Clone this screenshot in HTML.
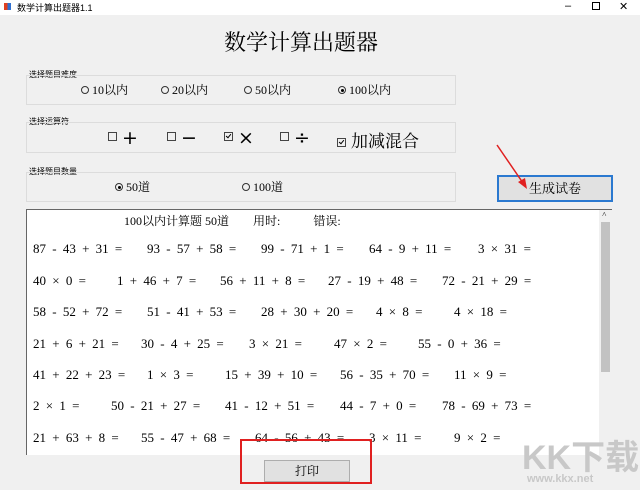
<!DOCTYPE html>
<html><head><meta charset="utf-8"><style>
*{margin:0;padding:0;box-sizing:border-box}
body{width:640px;height:490px;background:#f0f0f0;position:relative;overflow:hidden;font-family:"Liberation Serif","Noto Serif CJK SC",serif;color:#000}
.a{position:absolute;white-space:nowrap}
.tb{position:absolute;left:0;top:0;width:640px;height:15px;background:#fff;font-family:"Liberation Sans","Noto Sans CJK SC",sans-serif;font-size:9px}
.gb{position:absolute;border:1px solid #dcdcdc;left:26px;width:430px}
.lbl{position:absolute;font-family:"Liberation Sans","Noto Sans CJK SC",sans-serif;font-size:8px;left:29px}
.r{font-size:12px}
.eq{font-size:13px;position:absolute;white-space:nowrap;word-spacing:3px}
.rad{display:inline-block;width:8px;height:8px;border:1px solid #333;border-radius:50%;vertical-align:middle;margin-right:3px;position:relative;top:-1px}
.rad.on::after{content:"";position:absolute;left:1.5px;top:1.5px;width:3px;height:3px;border-radius:50%;background:#000}
.cb{display:inline-block;width:9px;height:9px;border:1px solid #444;vertical-align:middle;margin-right:5px;position:relative;top:-2px}
.cb.on::after{content:"";position:absolute;left:2px;top:0px;width:2px;height:4px;border:solid #000;border-width:0 1px 1px 0;transform:rotate(40deg)}
.op{position:absolute;white-space:nowrap;font-size:19px;font-family:"DejaVu Sans",sans-serif;line-height:20px}
</style></head><body>
<div class="tb"><div class="a" style="left:4px;top:3px;width:7px;height:7px;background:linear-gradient(90deg,#e04020 50%,#3070d0 50%)"></div><div class="a" style="left:17px;top:1px">数学计算出题器1.1</div>
<div class="a" style="left:565px;top:0;font-size:11px">–</div><div class="a" style="left:592px;top:2px;width:8px;height:8px;border:1px solid #000"></div><div class="a" style="left:619px;top:0;font-size:11px">✕</div></div>
<div class="a" style="left:224px;top:26px;font-size:22px">数学计算出题器</div>

<div class="lbl" style="top:69px">选择题目难度</div>
<div class="gb" style="top:75px;height:30px"></div>
<div class="a r" style="left:81px;top:81px"><span class="rad"></span>10以内</div>
<div class="a r" style="left:161px;top:81px"><span class="rad"></span>20以内</div>
<div class="a r" style="left:244px;top:81px"><span class="rad"></span>50以内</div>
<div class="a r" style="left:338px;top:81px"><span class="rad on"></span>100以内</div>

<div class="lbl" style="top:116px">选择运算符</div>
<div class="gb" style="top:122px;height:31px"></div>
<div class="op" style="left:108px;top:128px"><span class="cb"></span>+</div>
<div class="op" style="left:167px;top:128px"><span class="cb"></span>−</div>
<div class="op" style="left:224px;top:128px"><span class="cb on"></span>×</div>
<div class="op" style="left:280px;top:128px"><span class="cb"></span>÷</div>
<div class="a" style="left:337px;top:127px;font-size:17px"><span class="cb on" style="top:-1px"></span>加减混合</div>

<div class="lbl" style="top:166px">选择题目数量</div>
<div class="gb" style="top:172px;height:30px"></div>
<div class="a r" style="left:115px;top:178px"><span class="rad on"></span>50道</div>
<div class="a r" style="left:242px;top:178px"><span class="rad"></span>100道</div>

<div class="a" style="left:497px;top:175px;width:116px;height:27px;border:2px solid #2b79d0;background:#e1e1e1;font-size:13px;text-align:center;line-height:23px">生成试卷</div>
<svg class="a" style="left:0;top:0" width="640" height="490"><line x1="497" y1="145" x2="523" y2="183" stroke="#e02020" stroke-width="1.5"/><polygon points="527,189 518,182 525,178" fill="#e02020"/></svg>

<div class="a" style="left:26px;top:209px;width:586px;height:246px;background:#fff;border-top:1px solid #666;border-left:1px solid #666;overflow:hidden">
<div class="a" style="left:572px;top:0;width:13px;height:246px;background:#f0f0f0"></div>
<div class="a" style="left:574px;top:12px;width:9px;height:150px;background:#c2c2c2"></div>
<div class="a" style="left:575px;top:0;font-size:8px">˄</div>
<div class="a" style="left:97px;top:2px;font-size:12px">100以内计算题 50道 &nbsp; &nbsp; &nbsp; &nbsp;用时: &nbsp; &nbsp; &nbsp; &nbsp; &nbsp; 错误:</div>
</div>
<div class="eq" style="left:33px;top:241px">87 - 43 + 31 =</div><div class="eq" style="left:147px;top:241px">93 - 57 + 58 =</div><div class="eq" style="left:261px;top:241px">99 - 71 + 1 =</div><div class="eq" style="left:369px;top:241px">64 - 9 + 11 =</div><div class="eq" style="left:478px;top:241px">3 × 31 =</div>
<div class="eq" style="left:33px;top:273px">40 × 0 =</div><div class="eq" style="left:117px;top:273px">1 + 46 + 7 =</div><div class="eq" style="left:220px;top:273px">56 + 11 + 8 =</div><div class="eq" style="left:328px;top:273px">27 - 19 + 48 =</div><div class="eq" style="left:442px;top:273px">72 - 21 + 29 =</div>
<div class="eq" style="left:33px;top:304px">58 - 52 + 72 =</div><div class="eq" style="left:147px;top:304px">51 - 41 + 53 =</div><div class="eq" style="left:261px;top:304px">28 + 30 + 20 =</div><div class="eq" style="left:376px;top:304px">4 × 8 =</div><div class="eq" style="left:454px;top:304px">4 × 18 =</div>
<div class="eq" style="left:33px;top:336px">21 + 6 + 21 =</div><div class="eq" style="left:141px;top:336px">30 - 4 + 25 =</div><div class="eq" style="left:249px;top:336px">3 × 21 =</div><div class="eq" style="left:334px;top:336px">47 × 2 =</div><div class="eq" style="left:418px;top:336px">55 - 0 + 36 =</div>
<div class="eq" style="left:33px;top:367px">41 + 22 + 23 =</div><div class="eq" style="left:147px;top:367px">1 × 3 =</div><div class="eq" style="left:225px;top:367px">15 + 39 + 10 =</div><div class="eq" style="left:340px;top:367px">56 - 35 + 70 =</div><div class="eq" style="left:454px;top:367px">11 × 9 =</div>
<div class="eq" style="left:33px;top:398px">2 × 1 =</div><div class="eq" style="left:111px;top:398px">50 - 21 + 27 =</div><div class="eq" style="left:225px;top:398px">41 - 12 + 51 =</div><div class="eq" style="left:340px;top:398px">44 - 7 + 0 =</div><div class="eq" style="left:442px;top:398px">78 - 69 + 73 =</div>
<div class="eq" style="left:33px;top:430px">21 + 63 + 8 =</div><div class="eq" style="left:141px;top:430px">55 - 47 + 68 =</div><div class="eq" style="left:255px;top:430px">64 - 56 + 43 =</div><div class="eq" style="left:369px;top:430px">3 × 11 =</div><div class="eq" style="left:454px;top:430px">9 × 2 =</div>
<div class="a" style="left:26px;top:455px;width:586px;height:35px;background:#f0f0f0"></div>
<div class="a" style="left:264px;top:460px;width:86px;height:22px;border:1px solid #adadad;background:#e1e1e1;font-size:12px;text-align:center;line-height:20px">打印</div>
<div class="a" style="left:240px;top:439px;width:132px;height:45px;border:2px solid #e02020"></div>
<div class="a" style="left:522px;top:430px;font-size:34px;font-weight:bold;color:#c8c8c8;font-family:'Liberation Sans','Noto Sans CJK SC',sans-serif">KK下载</div>
<div class="a" style="left:527px;top:473px;font-size:11px;font-weight:bold;color:#c8c8c8;font-family:'Liberation Sans',sans-serif">www.kkx.net</div>
</body></html>
